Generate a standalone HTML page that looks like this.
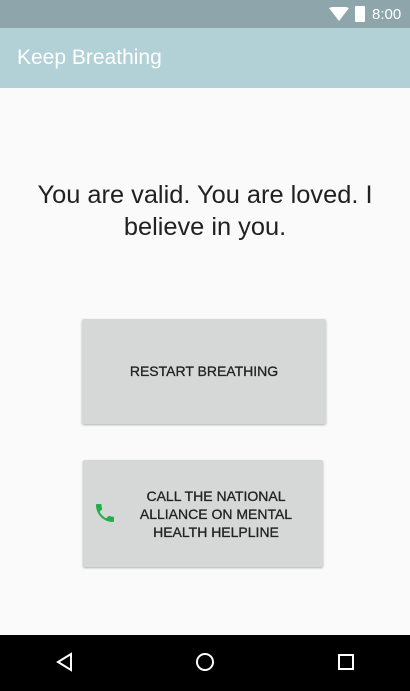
<!DOCTYPE html>
<html><head><meta charset="utf-8"><style>
html,body{margin:0;padding:0;width:410px;height:691px;overflow:hidden;background:#fafafa;font-family:"Liberation Sans",sans-serif}
.sb{position:absolute;left:0;top:0;width:410px;height:28px;background:#8ea6ab}
.ab{position:absolute;left:0;top:28px;width:410px;height:60px;background:#b1d1d6}
.ab span{position:absolute;left:17px;top:18px;color:#fff;font-size:21px}
.msg{position:absolute;left:10px;width:390px;top:179px;text-align:center;font-size:25.4px;line-height:32px;color:#212121}
.btn{position:absolute;background:#d6d7d7;border-radius:2px;box-shadow:0 1px 2px rgba(0,0,0,.3);color:#222;font-size:14px;text-align:center;-webkit-text-stroke:0.3px #222}
.nav{position:absolute;left:0;top:635px;width:410px;height:56px;background:#000}
</style></head><body>
<div class="sb">
<svg style="position:absolute;left:329px;top:7px" width="20" height="15"><path d="M0 1 Q10 -3 20 1 L10 14Z" fill="#fff"/></svg>
<div style="position:absolute;left:355px;top:6px;width:10px;height:16px;background:#fff;border-radius:1px"></div>
<span style="position:absolute;left:372px;top:6px;color:#fff;font-size:15px">8:00</span>
</div>
<div class="ab"><span>Keep Breathing</span></div>
<div class="msg">You are valid. You are loved. I believe in you.</div>
<div class="btn" style="left:82px;top:319px;width:244px;height:105px;line-height:105px">RESTART BREATHING</div>
<div class="btn" style="left:83px;top:460px;width:240px;height:107px">
<svg style="position:absolute;left:10px;top:41px" width="24" height="24" viewBox="0 0 24 24"><path fill="#1fae4a" d="M6.6 10.8c1.4 2.8 3.8 5.1 6.6 6.6l2.2-2.2c.3-.3.7-.4 1-.2 1.1.4 2.3.6 3.6.6.6 0 1 .4 1 1V20c0 .6-.4 1-1 1C10.6 21 3 13.4 3 4c0-.6.4-1 1-1h3.5c.6 0 1 .4 1 1 0 1.3.2 2.5.6 3.6.1.3 0 .7-.2 1L6.6 10.8z"/></svg>
<div style="position:absolute;left:48px;top:27px;width:170px;line-height:18px">CALL THE NATIONAL ALLIANCE ON MENTAL HEALTH HELPLINE</div>
</div>
<div class="nav">
<svg style="position:absolute;left:55px;top:17px" width="20" height="20"><path d="M16 2 L3 10 L16 18Z" fill="none" stroke="#fff" stroke-width="2"/></svg>
<svg style="position:absolute;left:195px;top:17px" width="20" height="20"><circle cx="10" cy="10" r="8" fill="none" stroke="#fff" stroke-width="2"/></svg>
<svg style="position:absolute;left:337px;top:18px" width="18" height="18"><rect x="2" y="2" width="14" height="14" fill="none" stroke="#fff" stroke-width="2"/></svg>
</div>
</body></html>
